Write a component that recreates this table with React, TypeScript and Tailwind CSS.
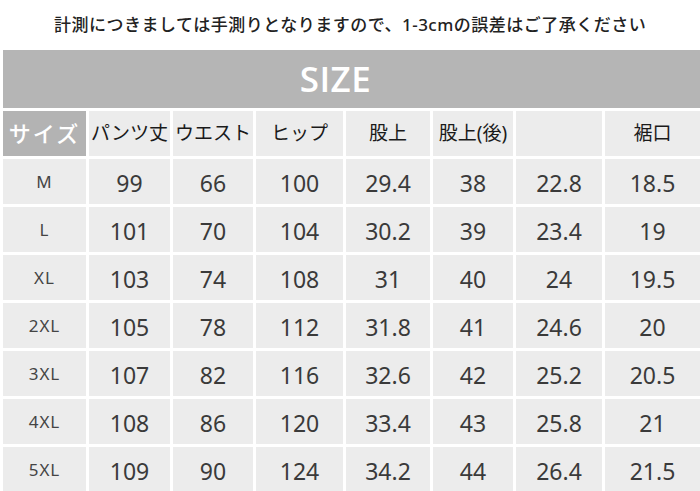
const headers = ['パンツ丈', 'ウエスト', 'ヒップ', '股上', '股上(後)', '', '裾口'];

const rows: [string, ...string[]][] = [
  ['M', '99', '66', '100', '29.4', '38', '22.8', '18.5'],
  ['L', '101', '70', '104', '30.2', '39', '23.4', '19'],
  ['XL', '103', '74', '108', '31', '40', '24', '19.5'],
  ['2XL', '105', '78', '112', '31.8', '41', '24.6', '20'],
  ['3XL', '107', '82', '116', '32.6', '42', '25.2', '20.5'],
  ['4XL', '108', '86', '120', '33.4', '43', '25.8', '21'],
  ['5XL', '109', '90', '124', '34.2', '44', '26.4', '21.5'],
];

export default function App() {
  return (
    <div className="w-[700px] h-[491px] overflow-hidden bg-white font-['Noto_Sans','Noto_Sans_CJK_JP',sans-serif]">
      {/* note line */}
      <div className="h-[50px] flex items-center pl-[54px] text-[17px] font-medium tracking-[0.5px] text-[#222]">
        計測につきましては手測りとなりますので、1-3cmの誤差はご了承ください
      </div>

      {/* banner */}
      <div className="ml-[3px] h-[58px] bg-[#b5b5b5] flex items-center justify-center pr-[32px]">
        <span className="text-white text-[35px] font-semibold tracking-[0.5px] font-['Open_Sans',sans-serif]">SIZE</span>
      </div>

      {/* table */}
      <div className="mt-[3px] ml-[3px] grid grid-cols-[83px_81px_80px_87px_84px_80px_86px_1fr] auto-rows-[45px] gap-[3px]">
        <div className="bg-[#b3b3b3] flex items-center justify-center text-white text-[22px] font-medium tracking-[2px]">
          サイズ
        </div>
        {headers.map((h, i) => (
          <div key={i} className="bg-[#ececec] flex items-center justify-center text-[19px] text-[#1a1a1a]">
            {h}
          </div>
        ))}

        {rows.map(([size, ...vals]) => (
          <>
            <div key={size} className="bg-[#ececec] flex items-center justify-center text-[17px] tracking-[1px] text-[#444] pt-[1px]">
              {size}
            </div>
            {vals.map((v, j) => (
              <div key={size + j} className="bg-[#ececec] flex items-center justify-center text-[23px] text-[#3a3a3a] pt-[3px]">
                {v}
              </div>
            ))}
          </>
        ))}
      </div>
    </div>
  );
}
